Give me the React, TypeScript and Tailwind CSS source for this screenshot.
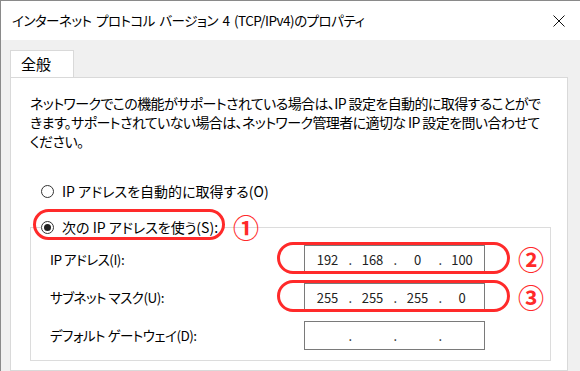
import React from "react";

const jp = "font-['Noto_Sans_CJK_JP','Noto_Sans',sans-serif] [font-feature-settings:'palt']";

const Radio = ({ checked }: { checked?: boolean }) => (
  <span className="w-[13px] h-[13px] rounded-full border border-[#333] bg-white flex items-center justify-center shrink-0">
    {checked && <span className="w-[7px] h-[7px] rounded-full bg-[#222]" />}
  </span>
);

const IpBox = ({ parts }: { parts: string[] }) => (
  <div className="w-[181px] h-[29px] border border-[#7a7a7a] bg-white grid grid-cols-[45px_45px_45px_44px] items-center text-[13px] leading-[27px] text-[#222] tracking-normal">
    {parts.map((p, i) => (
      <div key={i} className="relative h-[27px] flex justify-center">
        <span>{p || "\u00a0"}</span>
        {i < 3 && <span className="absolute -right-[2px] top-0">.</span>}
      </div>
    ))}
  </div>
);

const Mark = ({ n, className }: { n: string; className: string }) => (
  <span className={`absolute text-[26px] font-bold leading-none text-[#ff2a2a] ${className}`}>{n}</span>
);

const App = () => {
  return (
    <div className={`w-[580px] h-[371px] bg-[#f0f0f0] border-l border-t border-[#8a8a8a] flex flex-col overflow-hidden relative text-black ${jp}`}>
      {/* title bar */}
      <div className="h-[39px] bg-white flex items-center justify-between pl-[11px] pr-[15px] shrink-0">
        <span className="text-[13.5px] tracking-[-0.5px] [word-spacing:2px]">インターネット プロトコル バージョン 4 (TCP/IPv4)のプロパティ</span>
        <svg width="12" height="12" viewBox="0 0 12 12" className="mt-px">
          <path d="M0.5 0.5 L11.5 11.5 M11.5 0.5 L0.5 11.5" stroke="#111" strokeWidth="1" />
        </svg>
      </div>

      {/* tab */}
      <div className="pl-[9px] pt-[10px] shrink-0">
        <div className="w-[64px] h-[28px] bg-white border border-b-0 border-[#d9d9d9] flex items-center pl-[10px] text-[15px]">
          全般
        </div>
      </div>

      {/* panel */}
      <div className="ml-[9px] w-[558px] flex-1 bg-white border border-[#d9d9d9] -mt-px pt-[16px] pl-[19px]">
        <div className="text-[14px] leading-[19px] tracking-[-0.6px] whitespace-nowrap">
          <div>ネットワークでこの機能がサポートされている場合は、IP 設定を自動的に取得することがで</div>
          <div>きます。サポートされていない場合は、ネットワーク管理者に適切な IP 設定を問い合わせて</div>
          <div>ください。</div>
        </div>

        <div className="mt-[30px] ml-[11px] flex items-center gap-[8px] text-[14px] leading-[20px]">
          <Radio />
          <span>IP アドレスを自動的に取得する(O)</span>
        </div>

        {/* group box */}
        <div className="relative mt-[26px] w-[521px] h-[134px] border border-[#dcdcdc] pt-[17px] pl-[19px] pr-[65px]">
          <div className="absolute -top-[11px] left-[10px] bg-white pr-[4px] flex items-center gap-[8px] text-[14px] leading-[20px]">
            <Radio checked />
            <span>次の IP アドレスを使う(S):</span>
          </div>
          <div className="flex flex-col gap-[9px] text-[13.5px] tracking-[-0.5px]">
            <div className="flex items-center justify-between">
              <span>IP アドレス(I):</span>
              <IpBox parts={["192", "168", "0", "100"]} />
            </div>
            <div className="flex items-center justify-between">
              <span>サブネット マスク(U):</span>
              <IpBox parts={["255", "255", "255", "0"]} />
            </div>
            <div className="flex items-center justify-between">
              <span>デフォルト ゲートウェイ(D):</span>
              <IpBox parts={["", "", "", ""]} />
            </div>
          </div>
        </div>
      </div>

      {/* annotations */}
      <div className="absolute left-[32px] top-[208px] w-[192px] h-[31px] rounded-[16px] border-[3px] border-[#ff2a2a]" />
      <div className="absolute left-[276px] top-[241px] w-[233px] h-[32px] rounded-[16px] border-[3px] border-[#ff2a2a]" />
      <div className="absolute left-[276px] top-[279px] w-[233px] h-[32px] rounded-[16px] border-[3px] border-[#ff2a2a]" />
      <Mark n="①" className="left-[232px] top-[213px]" />
      <Mark n="②" className="left-[517px] top-[245px]" />
      <Mark n="③" className="left-[517px] top-[283px]" />
    </div>
  );
};

export default App;
